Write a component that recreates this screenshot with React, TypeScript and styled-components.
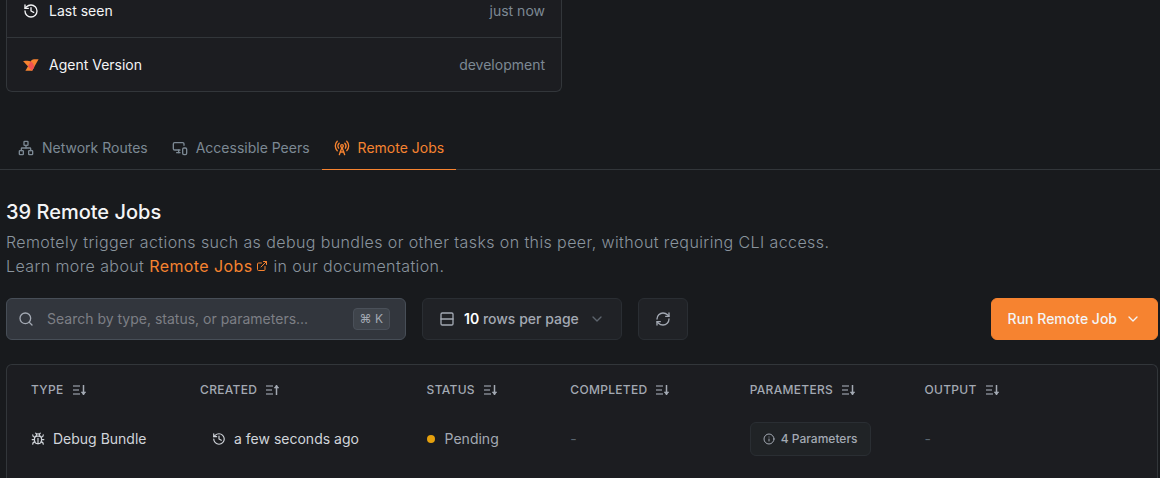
import React from "react";
import styled, { createGlobalStyle, css } from "styled-components";
import {
  Bug,
  ChevronDown,
  ExternalLink,
  History,
  Info,
  MonitorSmartphone,
  Network,
  RadioTower,
  RefreshCw,
  Rows2,
  Search,
} from "lucide-react";

const color = {
  page: "#181a1d",
  panel: "#1c1d21",
  raised: "#202226",
  line: "#32363a",
  softLine: "#2a2e33",
  muted: "#7c8994",
  soft: "#a3a9b3",
  text: "#d1d5db",
  bright: "#f3f4f6",
  accent: "#f68330",
};

const GlobalStyle = createGlobalStyle`
  *, *::before, *::after { box-sizing: border-box; }
  body {
    margin: 0;
    background: ${color.page};
    color: ${color.bright};
    font-family: Inter, "Liberation Sans", sans-serif;
    font-size: 14px;
    line-height: 20px;
  }
  button, input { font: inherit; }
  svg { flex: none; }
`;

const Page = styled.div`
  display: flex;
  flex-direction: column;
  height: 100vh;
  overflow: hidden;
`;

const InfoCard = styled.dl`
  flex: none;
  width: 48%;
  max-width: 556px;
  margin: -16px 0 0 6px;
  border: 1px solid ${color.line};
  border-top: 0;
  border-radius: 0 0 6px 6px;
  background: ${color.panel};
`;

const InfoRow = styled.div`
  display: flex;
  align-items: center;
  justify-content: space-between;
  box-sizing: content-box;
  height: 53px;
  padding: 0 16px;

  & + & {
    border-top: 1px solid ${color.line};
  }
`;

const InfoLabel = styled.dt`
  display: flex;
  align-items: center;
  gap: 10px;
`;

const InfoValue = styled.dd`
  margin: 0;
  color: ${color.muted};
`;

const Tabs = styled.div`
  display: flex;
  flex: none;
  margin-top: 34px;
  padding-left: 6px;
  border-bottom: 1px solid ${color.line};
`;

const Tab = styled.button<{ $active?: boolean }>`
  display: flex;
  align-items: center;
  gap: 8px;
  margin-bottom: -1px;
  padding: 12px 12px 11px;
  border: 0;
  border-bottom: 1px solid transparent;
  background: none;
  color: ${color.muted};
  cursor: pointer;

  ${(p) =>
    p.$active &&
    css`
      border-color: ${color.accent};
      color: ${color.accent};
    `}
`;

const Content = styled.main`
  display: flex;
  flex: 1;
  flex-direction: column;
  min-height: 0;
  padding: 28px 2px 0 6px;
`;

const Title = styled.h2`
  margin: 0;
  font-size: 20px;
  font-weight: 500;
  line-height: 28px;
`;

const Lead = styled.p`
  margin: 4px 0 0;
  color: #8a949e;
  font-size: 16px;
  font-weight: 300;
  line-height: 24px;
  letter-spacing: 0.025em;
`;

const DocLink = styled.a`
  display: inline-flex;
  align-items: center;
  gap: 4px;
  color: ${color.accent};
  font-weight: 400;
  text-decoration: none;
`;

const Toolbar = styled.div`
  display: flex;
  flex: none;
  gap: 16px;
  height: 42px;
  margin-top: 20px;
`;

const SearchBox = styled.label`
  display: flex;
  align-items: center;
  gap: 13px;
  width: 400px;
  padding: 0 15px 0 11px;
  border: 1px solid #474e57;
  border-radius: 6px;
  background: #32363d;
  color: ${color.soft};
`;

const SearchInput = styled.input`
  flex: 1;
  min-width: 0;
  padding: 0;
  border: 0;
  outline: 0;
  background: none;
  color: ${color.bright};

  &::placeholder {
    color: #7d7f85;
    opacity: 1;
  }
`;

const Shortcut = styled.kbd`
  padding: 0 6px;
  border: 1px solid #4a5059;
  border-radius: 4px;
  background: #3f444b;
  color: ${color.soft};
  font-family: inherit;
  font-size: 12px;
  line-height: 20px;
`;

const Button = styled.button<{ $primary?: boolean }>`
  display: flex;
  align-items: center;
  gap: 9px;
  padding: 0 16px;
  border: 1px solid ${color.softLine};
  border-radius: 6px;
  background: ${color.raised};
  color: ${color.soft};
  font-weight: 500;
  cursor: pointer;

  strong {
    color: #ffffff;
    font-weight: 600;
  }

  ${(p) =>
    p.$primary &&
    css`
      gap: 8px;
      margin-left: auto;
      border-color: ${color.accent};
      background: ${color.accent};
      color: ${color.bright};
    `}
`;

const PageSizeButton = styled(Button)`
  min-width: 200px;

  span {
    flex: 1;
    text-align: left;
  }
`;

const TablePanel = styled.section`
  flex: 1;
  margin-top: 24px;
  border: 1px solid ${color.line};
  border-bottom: 0;
  border-radius: 6px 6px 0 0;
  background: ${color.panel};
`;

const Table = styled.table`
  width: 100%;
  border-collapse: collapse;
  table-layout: fixed;
`;

const Column = styled.col<{ $share: number }>`
  width: ${(p) => p.$share}%;
`;

const HeadCell = styled.th`
  height: 49px;
  padding: 0 0 0 24px;
  text-align: left;
`;

const SortButton = styled.button`
  display: flex;
  align-items: center;
  gap: 9px;
  padding: 0;
  border: 0;
  background: none;
  color: ${color.soft};
  font-size: 12px;
  font-weight: 500;
  letter-spacing: 0.025em;
  text-transform: uppercase;
  cursor: pointer;
`;

const Cell = styled.td<{ $dim?: boolean }>`
  height: 50px;
  padding: 0 0 0 24px;
  color: ${(p) => (p.$dim ? "#5a6570" : color.text)};
`;

const CellLine = styled.div<{ $inset?: boolean }>`
  display: flex;
  align-items: center;
  gap: 8px;
  padding-left: ${(p) => (p.$inset ? 12 : 0)}px;
`;

const Status = styled(CellLine)`
  gap: 10px;
  color: ${color.soft};
`;

const Dot = styled.span`
  width: 8px;
  height: 8px;
  border-radius: 50%;
  background: #e5a00d;
`;

const ParamButton = styled.button`
  display: flex;
  align-items: center;
  gap: 6px;
  height: 34px;
  padding: 0 12px;
  border: 1px solid ${color.softLine};
  border-radius: 6px;
  background: #202326;
  color: ${color.soft};
  font-size: 12px;
  font-weight: 500;
  cursor: pointer;
`;

const BirdLogo = () => (
  <svg width="16" height="12" viewBox="0 0 31 23" fill="none" aria-hidden="true">
    <path
      d="M21.4631 0.5234C17.8173 0.8579 16.0028 2.9568 15.3171 4.0187L4.6641 22.4734H17.5163L30.1929 0.5234H21.4631Z"
      fill="#f68330"
    />
    <path
      d="M17.5265 22.4737L0 3.8853C0 3.8853 19.8177 -1.4413 21.7493 15.1738L17.5265 22.4737Z"
      fill="#f68330"
    />
    <path
      d="M14.9236 4.7056L9.5469 14.0208L17.5158 22.4747L21.7385 15.158C21.0696 9.4468 18.2851 6.3278 14.9236 4.6973"
      fill="#f05252"
    />
  </svg>
);

const SortIcon = ({ up }: { up?: boolean }) => (
  <svg width="14" height="12" viewBox="0 0 14 12" fill="none" stroke="currentColor" aria-hidden="true">
    <path d="M0 2H7M0 6H6M0 10H7" strokeWidth="1.7" opacity="0.75" />
    <path d="M10.5 1V11" strokeWidth="1.5" />
    <path d={up ? "M8.2 4L10.5 1.3L12.8 4Z" : "M8.2 8L10.5 10.7L12.8 8Z"} fill="currentColor" strokeWidth="0.6" />
  </svg>
);

const columns = [
  { name: "Type", share: 14.7 },
  { name: "Created", share: 19.7, up: true },
  { name: "Status", share: 12.5 },
  { name: "Completed", share: 15.6 },
  { name: "Parameters", share: 15.2 },
  { name: "Output", share: 22.3 },
];

export default function App() {
  return (
    <>
      <GlobalStyle />
      <Page>
        <InfoCard>
          <InfoRow>
            <InfoLabel>
              <History size={16} />
              Last seen
            </InfoLabel>
            <InfoValue>just now</InfoValue>
          </InfoRow>
          <InfoRow>
            <InfoLabel>
              <BirdLogo />
              Agent Version
            </InfoLabel>
            <InfoValue>development</InfoValue>
          </InfoRow>
        </InfoCard>

        <Tabs role="tablist">
          <Tab role="tab">
            <Network size={16} />
            Network Routes
          </Tab>
          <Tab role="tab">
            <MonitorSmartphone size={16} />
            Accessible Peers
          </Tab>
          <Tab role="tab" aria-selected="true" $active>
            <RadioTower size={16} />
            Remote Jobs
          </Tab>
        </Tabs>

        <Content>
          <Title>39 Remote Jobs</Title>
          <Lead>
            Remotely trigger actions such as debug bundles or other tasks on this peer, without requiring CLI access.
            <br />
            Learn more about{" "}
            <DocLink href="#docs">
              Remote Jobs
              <ExternalLink size={12} />
            </DocLink>{" "}
            in our documentation.
          </Lead>

          <Toolbar>
            <SearchBox>
              <Search size={16} />
              <SearchInput type="text" aria-label="Search jobs" placeholder="Search by type, status, or parameters..." />
              <Shortcut>⌘ K</Shortcut>
            </SearchBox>
            <PageSizeButton type="button">
              <Rows2 size={16} />
              <span>
                <strong>10</strong> rows per page
              </span>
              <ChevronDown size={16} color="#5d646d" />
            </PageSizeButton>
            <Button type="button" aria-label="Refresh">
              <RefreshCw size={16} />
            </Button>
            <Button type="button" $primary>
              Run Remote Job
              <ChevronDown size={16} />
            </Button>
          </Toolbar>

          <TablePanel>
            <Table>
              <colgroup>
                {columns.map((c) => (
                  <Column key={c.name} $share={c.share} />
                ))}
              </colgroup>
              <thead>
                <tr>
                  {columns.map((c) => (
                    <HeadCell key={c.name} scope="col">
                      <SortButton type="button">
                        {c.name}
                        <SortIcon up={c.up} />
                      </SortButton>
                    </HeadCell>
                  ))}
                </tr>
              </thead>
              <tbody>
                <tr>
                  <Cell>
                    <CellLine>
                      <Bug size={14} />
                      Debug Bundle
                    </CellLine>
                  </Cell>
                  <Cell>
                    <CellLine $inset>
                      <History size={14} />
                      a few seconds ago
                    </CellLine>
                  </Cell>
                  <Cell>
                    <Status>
                      <Dot />
                      Pending
                    </Status>
                  </Cell>
                  <Cell $dim>-</Cell>
                  <Cell>
                    <ParamButton type="button">
                      <Info size={12} />4 Parameters
                    </ParamButton>
                  </Cell>
                  <Cell $dim>-</Cell>
                </tr>
              </tbody>
            </Table>
          </TablePanel>
        </Content>
      </Page>
    </>
  );
}
